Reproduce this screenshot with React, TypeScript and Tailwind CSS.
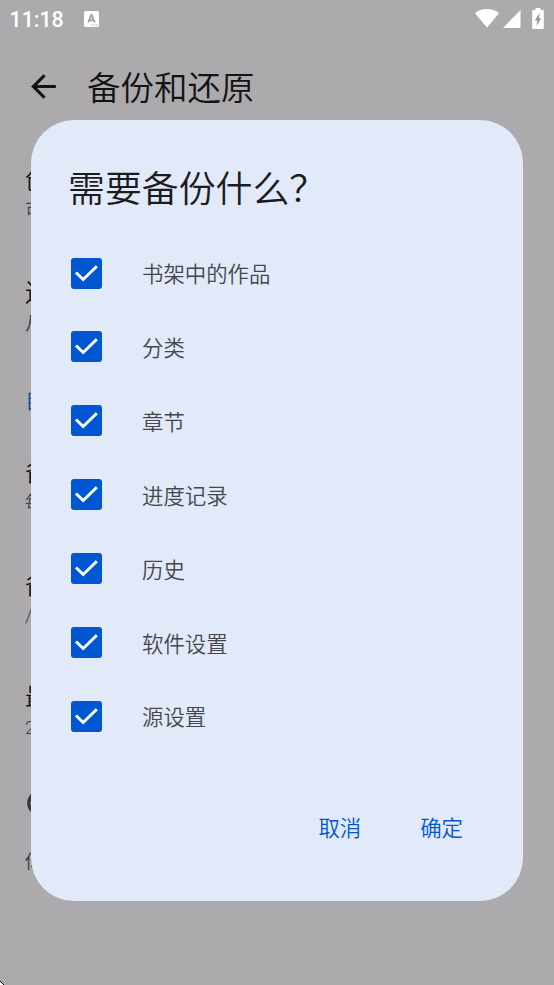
import { useState } from 'react';

const options = ['书架中的作品', '分类', '章节', '进度记录', '历史', '软件设置', '源设置'];

const preferences = [
    { title: '创建备份', summary: '可用于还原当前书架', className: 'h-[113px]' },
    { title: '还原备份', summary: '从备份文件还原书架', className: 'h-[92px]' },
    { header: '自动备份', className: 'h-[87px]' },
    { title: '备份频率', summary: '每 12 小时', className: 'h-[113px]' },
    { title: '备份位置', summary: '/storage/emulated/0', className: 'h-[112px]' },
    { title: '最大备份数', summary: '2', className: 'h-[108px]' },
];

const BackIcon = () => (
    <svg className="h-[37px] w-[37px]" viewBox="0 0 24 24" fill="currentColor">
        <path d="M20 11H7.83l5.59-5.59L12 4l-8 8 8 8 1.41-1.41L7.83 13H20v-2z" />
    </svg>
);

const InfoIcon = () => (
    <svg className="h-[30px] w-[30px]" viewBox="0 0 24 24" fill="none" stroke="currentColor" strokeWidth={2.5}>
        <circle cx="12" cy="12" r="9" />
        <path d="M12 11v6M12 7v2" />
    </svg>
);

const KeyboardBadge = () => (
    <svg className="h-4 w-[15px]" viewBox="0 0 15 16">
        <rect width="15" height="16" rx="1.5" fill="#fff" />
        <path d="M4.2 11.5L7.3 4h.4l3.1 7.5M5.3 9.2h4.4" fill="none" stroke="#a5a3a5" strokeWidth="1.9" />
        <path d="M7.5 14h6" stroke="#a5a3a5" strokeWidth="1" strokeDasharray="1.3 1" />
    </svg>
);

const WifiIcon = () => (
    <svg className="h-[19px] w-6" viewBox="0 0 24 19" fill="#fff">
        <path d="M12 18.6L0 4.2C3.3 1.4 7.4 0 12 0s8.7 1.4 12 4.2L12 18.6z" />
    </svg>
);

const SignalIcon = () => (
    <svg className="h-[18px] w-[18px]" viewBox="0 0 18 18" fill="#fff">
        <path d="M0 18L17.5 0v18z" />
    </svg>
);

const BatteryIcon = () => (
    <svg className="h-[21px] w-3" viewBox="0 0 12 21">
        <path d="M3.5 0h5v2H11a.8.8 0 01.8.8v17.4a.8.8 0 01-.8.8H1a.8.8 0 01-.8-.8V2.8A.8.8 0 011 2h2.5z" fill="#fff" />
        <path d="M8 4.5L2.800 12.500h2.500L4.500 18 9.200 10.200H6.800z" fill="#989698" />
    </svg>
);

const CheckIcon = () => (
    <svg className="h-[31px] w-[31px]" viewBox="0 0 31 31" fill="none">
        <path d="M5 14.5l7.2 7L25.8 8.2" stroke="#fff" strokeWidth="3" />
    </svg>
);

export default function App() {
    const [checked, setChecked] = useState<string[]>(options);

    const toggle = (name: string) => {
        setChecked(checked.includes(name) ? checked.filter((c) => c !== name) : [...checked, name]);
    };

    return (
        <div className="relative h-[985px] w-[554px] overflow-hidden bg-[#acaaac] font-['Noto_Sans_CJK_SC',sans-serif] font-[350] text-[#121315]">
            {/* Status bar */}
            <div className="flex h-[37px] items-center pl-[9.5px] pr-[10px] text-white">
                <span className="pt-[3px] font-[Roboto,sans-serif] text-[21.4px] font-medium leading-none">11:18</span>
                <div className="ml-[20px]"><KeyboardBadge /></div>
                <div className="ml-auto flex items-center">
                    <WifiIcon />
                    <div className="ml-1 mr-[11px] pt-[1px]"><SignalIcon /></div>
                    <BatteryIcon />
                </div>
            </div>

            {/* App bar */}
            <div className="flex h-[98px] items-center pl-[25px]">
                <BackIcon />
                <h1 className="ml-[25px] text-[33.5px] leading-none">备份和还原</h1>
            </div>

            {/* Preferences below the dialog */}
            <div className="pl-[25px] pt-[28px]">
                {preferences.map((item) => (
                    <div key={item.title ?? item.header} className={item.className}>
                        {item.header ? (
                            <p className="pt-[15px] text-[21.5px] leading-[32px] text-[#0b489b]">{item.header}</p>
                        ) : (
                            <>
                                <p className="text-[24.6px] leading-[31px]">{item.title}</p>
                                <p className="pt-[3px] font-[Roboto,'Noto_Sans_CJK_SC',sans-serif] text-[18.5px] leading-[28px] text-[#3f4146]">
                                    {item.summary}
                                </p>
                            </>
                        )}
                    </div>
                ))}
                <div className="text-[#34363a]">
                    <InfoIcon />
                    <p className="pt-[28px] text-[18.5px] leading-[28px]">你应该将备份副本保存到其他位置</p>
                </div>
            </div>

            {/* Dialog */}
            <div className="absolute left-[31px] top-[120px] flex h-[781px] w-[492px] flex-col rounded-[43px] bg-[#e2e9f8] px-[38px] pt-[45px]">
                <h2 className="-ml-[1px] text-[36.9px] leading-[42px] text-[#1b1c1e]">需要备份什么？</h2>
                <div className="mt-[29.2px]">
                    {options.map((name) => (
                        <button
                            key={name}
                            type="button"
                            onClick={() => toggle(name)}
                            className="flex h-[73.85px] w-full items-center pl-[2px] text-left"
                        >
                            <span
                                className={`h-[31px] w-[31px] shrink-0 rounded-[3px] ${
                                    checked.includes(name) ? 'bg-[#0057d1]' : 'border-3 border-[#44474e]'
                                }`}
                            >
                                {checked.includes(name) && <CheckIcon />}
                            </span>
                            <span className="ml-[40px] text-[21.4px] leading-none text-[#44474e]">{name}</span>
                        </button>
                    ))}
                </div>
                <div className="mt-[54.4px] flex justify-end gap-[59px] pr-[22px] text-[21.4px] leading-[40px] text-[#0057d1]">
                    <button type="button">取消</button>
                    <button type="button">确定</button>
                </div>
            </div>

            {/* Pointer tip in the corner */}
            <svg className="absolute bottom-0 left-0 h-[5px] w-[5px]" viewBox="0 0 5 5">
                <path d="M0 1l4 4H0z" fill="#fff" />
                <path d="M0 1l4 4" stroke="#000" strokeWidth="1" />
            </svg>
        </div>
    );
}
